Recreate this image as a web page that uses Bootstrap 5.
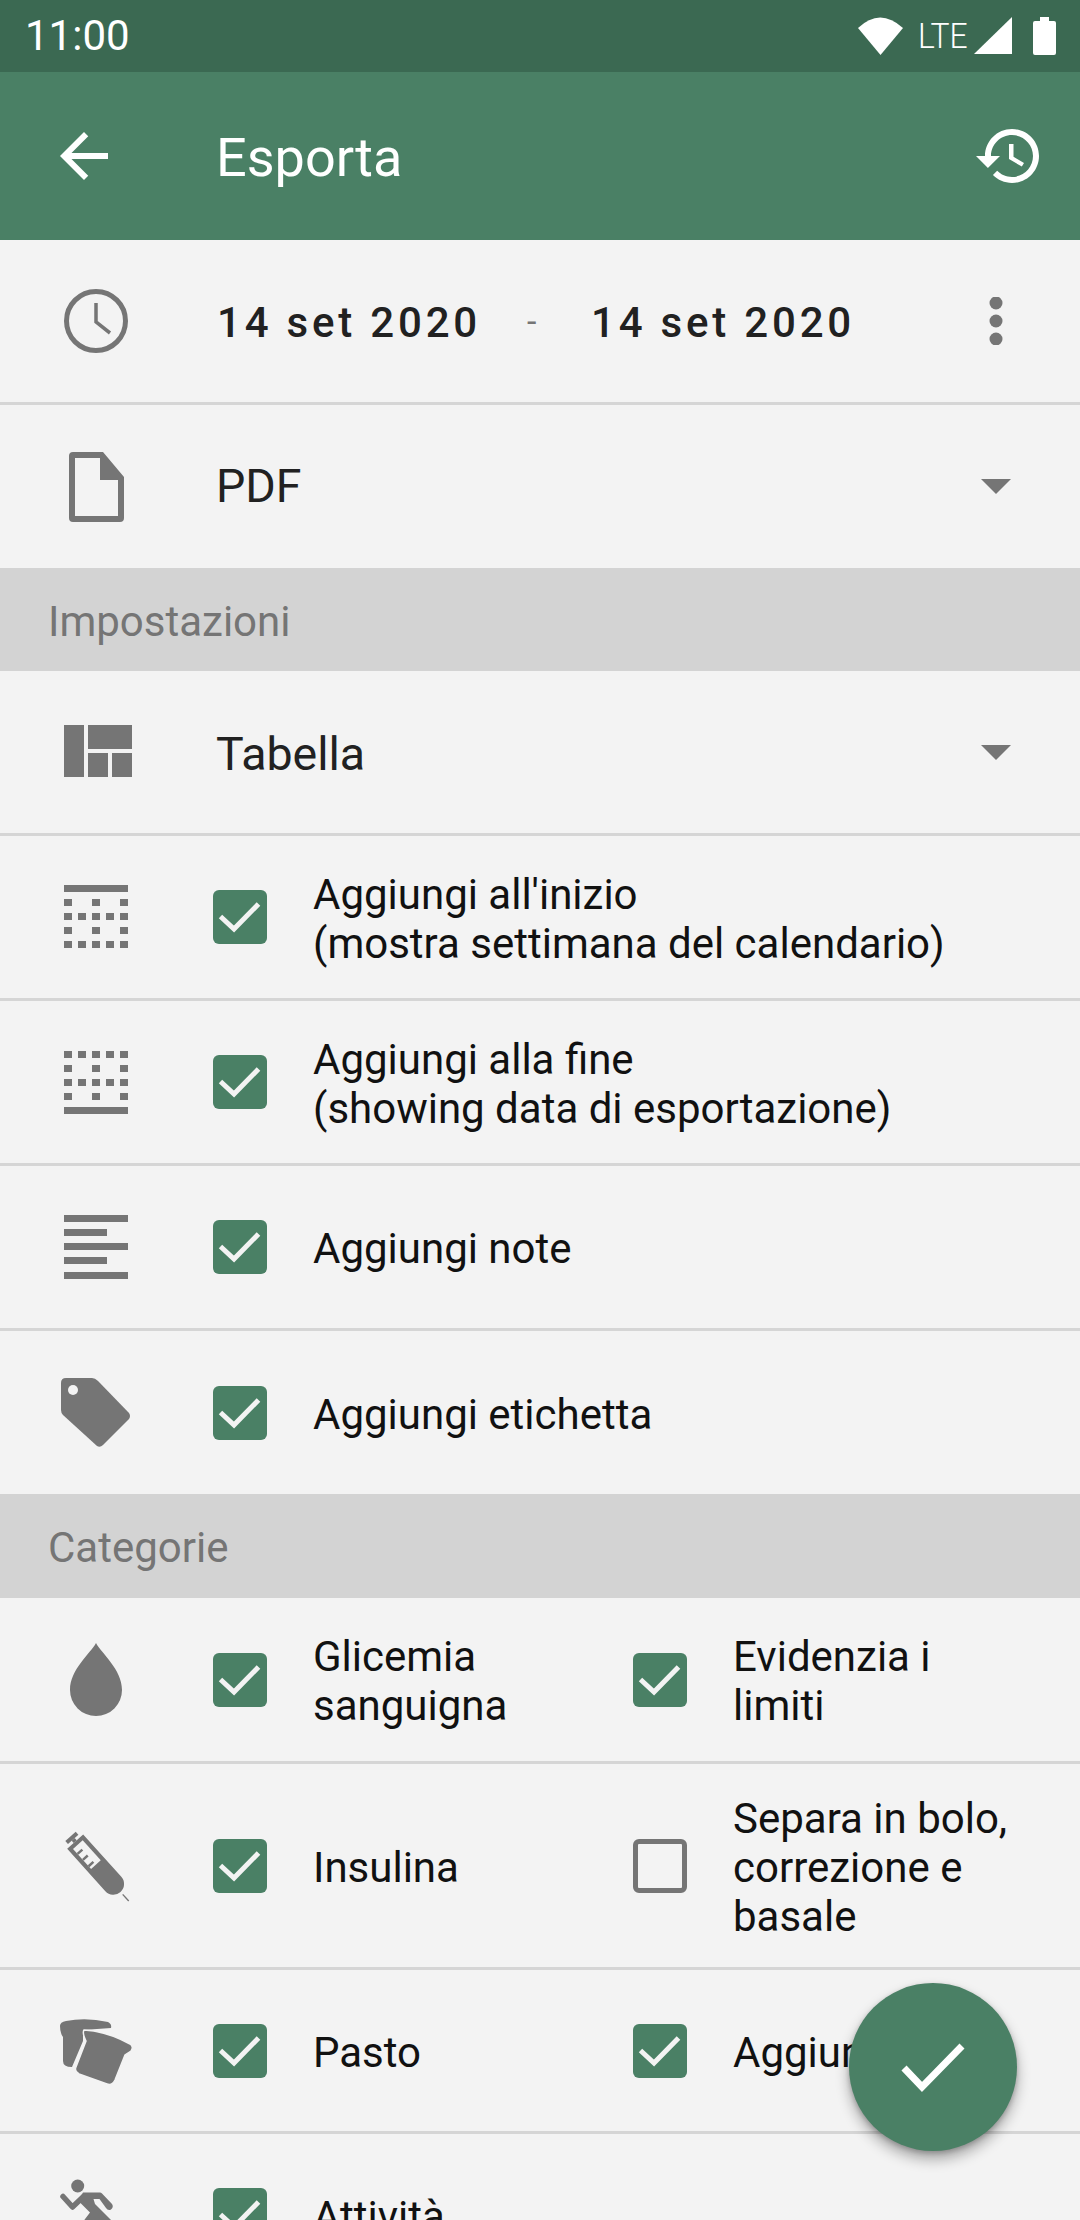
<!DOCTYPE html>
<html lang="it">
<head>
    <meta charset="UTF-8">
    <meta name="viewport" content="width=device-width, initial-scale=1.0">
    <title>Esporta</title>
    <link href="https://cdn.jsdelivr.net/npm/bootstrap@5.3.0/dist/css/bootstrap.min.css" rel="stylesheet">
    <style>
        body {
            width: 1080px;
            height: 2220px;
            overflow: hidden;
            position: relative;
            background: #f3f3f3;
            font-family: Roboto, "Liberation Sans", sans-serif;
        }
        .status-bar {
            height: 72px;
            background: #3b6952;
            color: #fff;
            padding: 0 24px 0 25px;
        }
        .status-time { font-size: 42px; line-height: 72px; }
        .status-lte {
            font-size: 35px;
            font-weight: 300;
            line-height: 1;
            width: 49px;
            margin: 0 7px 0 15px;
            transform: scaleX(.91);
            transform-origin: left center;
        }
        .status-batt { margin-left: 21px; }
        .app-bar {
            height: 168px;
            background: #4a8065;
            color: #fff;
            padding: 0 35px 0 48px;
        }
        .app-title { font-size: 54px; margin-left: 96px; line-height: 1; padding-top: 4px; }
        .riga { height: 165px; border-bottom: 3px solid #d5d5d5; }
        .riga-end { height: 163px; border-bottom: 0; }
        .riga-alta { height: 206px; }
        .riga-166 { height: 166px; }
        .riga-164 { height: 164px; }
        .sezione {
            height: 103px;
            background: #d3d3d3;
            color: #757575;
            font-size: 42px;
            padding-left: 48px;
            padding-top: 3px;
        }
        .sezione-cat { height: 104px; }
        .ico-cell { width: 192px; flex: none; }
        .ico-cell svg { fill: #757575; }
        .scelta { font-size: 46.5px; color: #212121; margin-left: 24px; padding-top: 1px; }
        .scelta-bassa { padding-top: 6px; }
        .date-txt {
            font-size: 42px;
            font-weight: 500;
            letter-spacing: 3.8px;
            color: #212121;
            margin-left: 25px;
            padding-top: 2px;
        }
        .date-sep { font-size: 34px; color: #757575; margin-left: 46px; width: 64px; }
        .date-sep + .date-txt { margin-left: 0; }
        .tri {
            width: 0;
            height: 0;
            border-left: 15px solid transparent;
            border-right: 15px solid transparent;
            border-top: 15px solid #757575;
        }
        .end-slot { position: absolute; left: 981px; }
        .colonne { margin-left: 21px; width: 840px; }
        .voce { font-size: 42px; line-height: 49px; color: #111; }
        .voce span { padding-top: 3px; }
        .voce .form-check-input {
            width: 54px;
            height: 54px;
            flex: none;
            margin: 0 46px 0 0;
            border: 5px solid #757575;
            border-radius: 6px;
            background-color: transparent;
            box-shadow: none;
        }
        .voce .form-check-input:checked {
            border: 0;
            background-color: #4a8065;
            background-size: 54px 54px;
            background-image: url("data:image/svg+xml,%3Csvg xmlns='http://www.w3.org/2000/svg' viewBox='0 0 54 54'%3E%3Cpath fill='none' stroke='%23f3f3f3' stroke-width='5' d='M7.5 26.5 21 39 45.5 14'/%3E%3C/svg%3E");
        }
        .fab {
            position: absolute;
            left: 849px;
            top: 1983px;
            width: 168px;
            height: 168px;
            padding: 0;
            border: 0;
            background: #4a8065;
            box-shadow: 0 8px 14px rgba(0,0,0,.32), 0 2px 5px rgba(0,0,0,.2);
        }
    </style>
</head>
<body>
    <!-- Status bar -->
    <div class="status-bar d-flex align-items-center">
        <span class="status-time">11:00</span>
        <span class="ms-auto d-flex align-items-center">
            <svg width="45" height="38" viewBox="0 0 45 38" fill="#fff"><path d="M0 11Q22-10 45 11L22.5 38Z"/></svg>
            <span class="status-lte">LTE</span>
            <svg width="38" height="38" viewBox="0 0 38 38" fill="#fff"><path d="M0 37 38 0V37Z"/></svg>
            <svg class="status-batt" width="23" height="38" viewBox="0 0 23 38" fill="#fff"><path d="M7 0H16V4H21Q23 4 23 6V36Q23 38 21 38H2Q0 38 0 36V6Q0 4 2 4H7Z"/></svg>
        </span>
    </div>

    <!-- App bar -->
    <div class="app-bar d-flex align-items-center">
        <svg width="72" height="72" viewBox="0 0 24 24" fill="#fff"><path d="M20 11H7.83l5.59-5.59L12 4l-8 8 8 8 1.41-1.41L7.83 13H20v-2z"/></svg>
        <span class="app-title">Esporta</span>
        <svg class="ms-auto" width="72" height="72" viewBox="0 0 24 24" fill="#fff"><path d="M13 3c-4.97 0-9 4.03-9 9H1l3.89 3.89.07.14L9 12H6c0-3.87 3.13-7 7-7s7 3.13 7 7-3.13 7-7 7c-1.93 0-3.68-.79-4.94-2.06l-1.42 1.42C8.27 19.99 10.51 21 13 21c4.97 0 9-4.03 9-9s-4.03-9-9-9zm-1 5v5l4.28 2.54.72-1.21-3.5-2.08V8H12z"/></svg>
    </div>

    <!-- Periodo -->
    <div class="riga d-flex align-items-center position-relative">
        <div class="ico-cell d-flex justify-content-center">
            <svg width="80" height="80" viewBox="0 0 80 80"><circle cx="40" cy="40" r="29.5" fill="none" stroke="#757575" stroke-width="5"/><path d="M40 22V41L54 52" fill="none" stroke="#757575" stroke-width="3.5"/></svg>
        </div>
        <span class="date-txt">14 set 2020</span>
        <span class="date-sep">-</span>
        <span class="date-txt">14 set 2020</span>
        <svg class="end-slot" width="30" height="48" viewBox="0 0 30 48" fill="#757575"><circle cx="15" cy="6" r="6.5"/><circle cx="15" cy="24" r="6.5"/><circle cx="15" cy="42" r="6.5"/></svg>
    </div>

    <!-- Formato -->
    <div class="riga riga-end d-flex align-items-center position-relative">
        <div class="ico-cell d-flex justify-content-center">
            <svg width="80" height="80" viewBox="0 0 80 80"><path fill-rule="evenodd" d="M17 5H47L68 30V71Q68 75 64 75H17Q13 75 13 71V9Q13 5 17 5ZM19 11V69H62V33H44V11Z"/></svg>
        </div>
        <span class="scelta">PDF</span>
        <span class="tri end-slot"></span>
    </div>

    <div class="sezione d-flex align-items-center">Impostazioni</div>

    <!-- Tabella -->
    <div class="riga d-flex align-items-center position-relative">
        <div class="ico-cell d-flex justify-content-center">
            <svg width="80" height="80" viewBox="0 0 80 80"><rect x="8" y="13" width="20" height="52"/><rect x="32" y="13" width="44" height="24"/><rect x="32" y="41" width="20" height="24"/><rect x="56" y="41" width="20" height="24"/></svg>
        </div>
        <span class="scelta scelta-bassa">Tabella</span>
        <span class="tri end-slot"></span>
    </div>

    <div class="riga d-flex align-items-center">
        <div class="ico-cell d-flex justify-content-center">
            <svg width="80" height="80" viewBox="0 0 80 80"><path d="M8 8H72V15H8ZM8 22h8v7H8ZM36 22h8v7h-8ZM64 22h8v7h-8ZM8 36h8v7H8ZM22 36h8v7h-8ZM36 36h8v7h-8ZM50 36h8v7h-8ZM64 36h8v7h-8ZM8 50h8v7H8ZM36 50h8v7h-8ZM64 50h8v7h-8ZM8 64h8v7H8ZM22 64h8v7h-8ZM36 64h8v7h-8ZM50 64h8v7h-8ZM64 64h8v7h-8Z"/></svg>
        </div>
        <div class="colonne voce d-flex align-items-center">
            <input class="form-check-input" type="checkbox" checked>
            <span>Aggiungi all'inizio<br>(mostra settimana del calendario)</span>
        </div>
    </div>

    <div class="riga d-flex align-items-center">
        <div class="ico-cell d-flex justify-content-center">
            <svg width="80" height="80" viewBox="0 0 80 80"><path d="M8 65H72V72H8ZM8 9h8v7H8ZM22 9h8v7h-8ZM36 9h8v7h-8ZM50 9h8v7h-8ZM64 9h8v7h-8ZM8 23h8v7H8ZM36 23h8v7h-8ZM64 23h8v7h-8ZM8 37h8v7H8ZM22 37h8v7h-8ZM36 37h8v7h-8ZM50 37h8v7h-8ZM64 37h8v7h-8ZM8 51h8v7H8ZM36 51h8v7h-8ZM64 51h8v7h-8Z"/></svg>
        </div>
        <div class="colonne voce d-flex align-items-center">
            <input class="form-check-input" type="checkbox" checked>
            <span>Aggiungi alla fine<br>(showing data di esportazione)</span>
        </div>
    </div>

    <div class="riga d-flex align-items-center">
        <div class="ico-cell d-flex justify-content-center">
            <svg width="80" height="80" viewBox="0 0 80 80"><path d="M8 8H72V15H8ZM8 22H51V29H8ZM8 36H72V43H8ZM8 50H51V57H8ZM8 65H72V72H8Z"/></svg>
        </div>
        <div class="colonne voce d-flex align-items-center">
            <input class="form-check-input" type="checkbox" checked>
            <span>Aggiungi note</span>
        </div>
    </div>

    <div class="riga riga-end d-flex align-items-center">
        <div class="ico-cell d-flex justify-content-center">
            <svg width="80" height="80" viewBox="0 0 80 80"><path d="M10 5H36Q39 5 42 8L73 40Q75 43 73 46L47 72Q44 75 41 73L7 42Q5 40 5 37V10Q5 5 10 5Z"/><circle cx="17" cy="17" r="5" fill="#f3f3f3"/></svg>
        </div>
        <div class="colonne voce d-flex align-items-center">
            <input class="form-check-input" type="checkbox" checked>
            <span>Aggiungi etichetta</span>
        </div>
    </div>

    <div class="sezione sezione-cat d-flex align-items-center">Categorie</div>

    <!-- Categorie -->
    <div class="riga riga-166 d-flex align-items-center">
        <div class="ico-cell d-flex justify-content-center">
            <svg width="80" height="80" viewBox="0 0 80 80"><path d="M40 3C35 13 14 29 14 50A26 26 0 0 0 66 50C66 29 45 13 40 3Z"/></svg>
        </div>
        <div class="colonne row g-0">
            <div class="col-6 voce d-flex align-items-center">
                <input class="form-check-input" type="checkbox" checked>
                <span>Glicemia<br>sanguigna</span>
            </div>
            <div class="col-6 voce d-flex align-items-center">
                <input class="form-check-input" type="checkbox" checked>
                <span>Evidenzia i<br>limiti</span>
            </div>
        </div>
    </div>

    <div class="riga riga-alta d-flex align-items-center">
        <div class="ico-cell d-flex justify-content-center">
            <svg width="80" height="80" viewBox="0 0 80 80">
                <g transform="translate(14.5 10.4) rotate(48)">
                    <rect x="0" y="-7" width="4" height="14"/>
                    <rect x="4" y="-2" width="3" height="4"/>
                    <path d="M7-10.75H64A10.75 10.75 0 0 1 64 10.75H7Z"/>
                    <rect x="11" y="-6.5" width="27" height="13" fill="#f3f3f3"/>
                    <path d="M16.5 0H19V6.5H16.5ZM24.5 0H27V6.5H24.5ZM33 0H35.5V6.5H33Z"/>
                    <rect x="78" y="-.7" width="9" height="1.4"/>
                </g>
            </svg>
        </div>
        <div class="colonne row g-0">
            <div class="col-6 voce d-flex align-items-center">
                <input class="form-check-input" type="checkbox" checked>
                <span>Insulina</span>
            </div>
            <div class="col-6 voce d-flex align-items-center">
                <input class="form-check-input" type="checkbox">
                <span>Separa in bolo,<br>correzione e<br>basale</span>
            </div>
        </div>
    </div>

    <div class="riga riga-164 d-flex align-items-center">
        <div class="ico-cell d-flex justify-content-center">
            <svg width="80" height="80" viewBox="0 0 80 80">
                <path d="M4 15Q4 11 10 10Q30 6 52 11Q56 13 55 17L27 19V30L16 56Q7 56 7 50V26Q4 22 4 15Z"/>
                <path stroke="#f3f3f3" stroke-width="1.5" d="M28 19Q50 20 74 33Q78 36 75 40L69 44L59 69Q56 75 51 73L23 63Q18 60 20 56L30 30Q26 22 28 19Z"/>
            </svg>
        </div>
        <div class="colonne row g-0">
            <div class="col-6 voce d-flex align-items-center">
                <input class="form-check-input" type="checkbox" checked>
                <span>Pasto</span>
            </div>
            <div class="col-6 voce d-flex align-items-center">
                <input class="form-check-input" type="checkbox" checked>
                <span>Aggiungi</span>
            </div>
        </div>
    </div>

    <div class="riga riga-164 d-flex align-items-center">
        <div class="ico-cell d-flex justify-content-center">
            <svg width="80" height="80" viewBox="0 0 80 80">
                <circle cx="21.7" cy="11" r="6.5"/>
                <path fill="none" stroke="#757575" stroke-width="5.5" stroke-linecap="round" stroke-linejoin="round" d="M7 21.5 16.5 32 27 22"/>
                <path d="M27 17.5H44Q45 17.5 46 18.5L56 29Q58 32 55 34.5Q52 36 50 33L43.5 24H37.5L39 29L58 48H26L34 37.5L22 25.5Z"/>
            </svg>
        </div>
        <div class="colonne voce d-flex align-items-center">
            <input class="form-check-input" type="checkbox" checked>
            <span>Attività</span>
        </div>
    </div>

    <!-- Conferma -->
    <button type="button" class="fab btn rounded-circle d-flex align-items-center justify-content-center">
        <svg width="168" height="168" viewBox="0 0 168 168"><path fill="none" stroke="#fff" stroke-width="7" d="M55 85 73 104 113 63"/></svg>
    </button>

    <script src="https://cdn.jsdelivr.net/npm/bootstrap@5.3.0/dist/js/bootstrap.bundle.min.js"></script>
</body>
</html>
